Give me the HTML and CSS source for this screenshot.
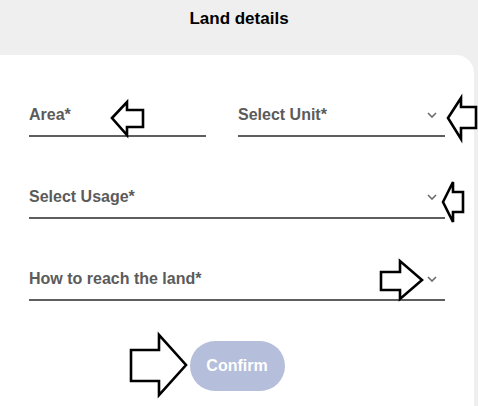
FILE: index.html
```html
<!DOCTYPE html>
<html>
<head>
<meta charset="utf-8">
<link rel="stylesheet" href="styles.css">
</head>
<body>
<div class="page">
  <header class="header">Land details</header>
  <main class="card">
    <div class="row">
      <div class="field field-area"><span class="label">Area*</span></div>
      <div class="field field-unit"><span class="label">Select Unit*</span>
        <svg class="chev" width="10" height="6" viewBox="0 0 10 6"><path d="M1 1 L5 5 L9 1" fill="none" stroke="#6a6a6a" stroke-width="1.6"/></svg>
      </div>
    </div>
    <div class="field"><span class="label">Select Usage*</span>
      <svg class="chev" width="10" height="6" viewBox="0 0 10 6"><path d="M1 1 L5 5 L9 1" fill="none" stroke="#6a6a6a" stroke-width="1.6"/></svg>
    </div>
    <div class="field"><span class="label">How to reach the land*</span>
      <svg class="chev" width="10" height="6" viewBox="0 0 10 6"><path d="M1 1 L5 5 L9 1" fill="none" stroke="#6a6a6a" stroke-width="1.6"/></svg>
    </div>
    <div class="actions">
      <button class="confirm">Confirm</button>
    </div>
  </main>
  <svg class="annotations" width="478" height="406" viewBox="0 0 478 406">
    <g fill="#fff" stroke="#000" stroke-width="2.6" stroke-linejoin="miter">
      <polygon points="112,118 127,102 127,110 143,110 143,127 127,127 127,135"/>
      <polygon points="448,118 461,98 461,107 476,107 476,128 461,128 461,139"/>
      <polygon points="443,202 453,182 453,192 463,192 463,212 453,212 453,222"/>
      <polygon points="381,272 400,272 400,261 422,280 400,299 400,290 381,290"/>
      <polygon points="131,350 159,350 159,335 186,365 159,395 159,381 131,381"/>
    </g>
  </svg>
</div>
</body>
</html>
```

FILE: styles.css
```css
html, body {
  margin: 0;
  padding: 0;
  background: #efefef;
  width: 478px;
  height: 406px;
  overflow: hidden;
}

.page {
  position: relative;
  width: 478px;
  height: 406px;
  display: flex;
  flex-direction: column;
  font-family: "Liberation Sans", Arial, sans-serif;
}

.header {
  height: 46px;
  padding-top: 9px;
  text-align: center;
  font-size: 17px;
  line-height: 20px;
  font-weight: 700;
  color: #000;
}

.card {
  flex: 1;
  width: 416px;
  background: #fff;
  border-top-right-radius: 18px;
  padding: 50px 29px 0 29px;
  display: flex;
  flex-direction: column;
  gap: 50px;
}

.row {
  display: flex;
  gap: 32px;
}

.field {
  display: flex;
  align-items: center;
  justify-content: space-between;
  padding-bottom: 10px;
  border-bottom: 2px solid #5e5e5e;
}

.field-area {
  width: 177px;
}

.field-unit {
  flex: 1;
}

.label {
  font-size: 16px;
  line-height: 20px;
  font-weight: 700;
  color: #5b5b5b;
}

.chev {
  margin-right: 8px;
}

.actions {
  display: flex;
  justify-content: center;
  margin-top: -10px;
}

.confirm {
  width: 95px;
  height: 50px;
  border: none;
  border-radius: 25px;
  background: #b5bedb;
  color: #fff;
  font-family: "Liberation Sans", Arial, sans-serif;
  font-size: 16px;
  font-weight: 700;
  padding: 0;
}

.annotations {
  position: absolute;
  left: 0;
  top: 0;
  pointer-events: none;
}
```
